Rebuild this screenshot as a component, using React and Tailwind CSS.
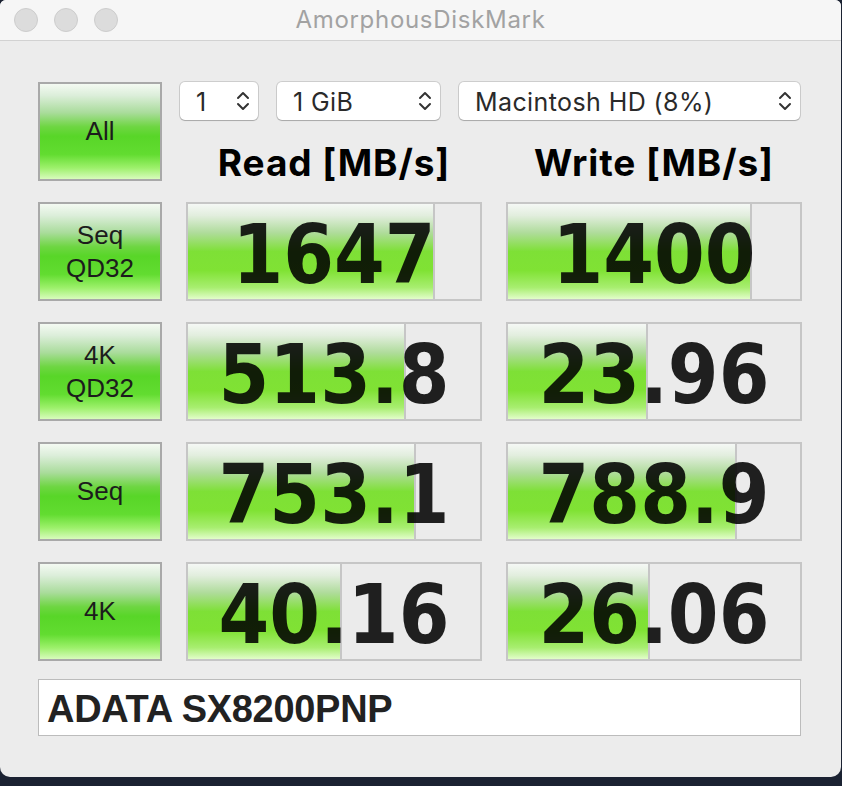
import React from "react";

const BTN_BG =
  "linear-gradient(to bottom, #f4faf2 0%, #dceeda 12%, #aadc9c 30%, #6ed642 45%, #58d628 55%, #62dc30 74%, #9cf06a 88%, #d8fcbc 100%)";
const BAR_BG =
  "linear-gradient(to bottom, #f5f8f5 0%, #e2eede 12%, #b0dc9c 30%, #7ee036 50%, #80e234 70%, #a8ee70 88%, #e2fdca 100%)";

const ROWS = [
  { label: ["Seq", "QD32"], read: "1647", rf: 0.845, write: "1400", wf: 0.834 },
  { label: ["4K", "QD32"], read: "513.8", rf: 0.745, write: "23.96", wf: 0.481 },
  { label: ["Seq"], read: "753.1", rf: 0.78, write: "788.9", wf: 0.783 },
  { label: ["4K"], read: "40.16", rf: 0.526, write: "26.06", wf: 0.488 },
];

function Chevrons() {
  return (
    <svg width="16" height="24" viewBox="0 0 16 24" fill="none" stroke="#333" strokeWidth="2" strokeLinecap="round" strokeLinejoin="round">
      <path d="M3 9 L8 4 L13 9" />
      <path d="M3 15 L8 20 L13 15" />
    </svg>
  );
}

function Select({ w, children }) {
  return (
    <div
      className="h-[38px] bg-white rounded-[5px] flex items-center justify-between pl-4 pr-[7px] shadow-[0_0_0_1px_rgba(0,0,0,0.13),0_1px_1px_rgba(0,0,0,0.18)]"
      style={{ width: w }}
    >
      <span className="pt-[3px] text-[25px] text-[#2a2a2a] tracking-[0.4px] font-['Inter',sans-serif] leading-none">{children}</span>
      <Chevrons />
    </div>
  );
}

function TestButton({ lines }) {
  return (
    <div
      className="h-[99px] border-2 border-[#a9a9a9] flex flex-col items-center justify-center text-[26px] leading-[33px] text-[#1c1c1c] font-['Liberation_Sans',sans-serif]"
      style={{ background: BTN_BG }}
    >
      {lines.map(l => (
        <span key={l}>{l}</span>
      ))}
    </div>
  );
}

function Cell({ value, frac }) {
  return (
    <div className="relative h-[99px] border-2 border-[#c6c6c6] bg-[#ebebeb]">
      <div
        className="absolute left-0 top-0 bottom-0 border-r-2 border-[#c6c6c6]"
        style={{ width: `${frac * 100}%`, background: BAR_BG }}
      />
      <div className="absolute inset-0 flex items-center justify-center pt-[6px]">
        <span className="text-[73px] font-bold leading-none text-black/[0.87] font-['DejaVu_Sans',sans-serif] scale-y-[1.13]">
          {value}
        </span>
      </div>
    </div>
  );
}

export default function App() {
  return (
    <div className="w-[842px] h-[786px] bg-[#1b2232]">
      <div className="w-[841px] h-[777px] bg-[#ececec] rounded-t-[6px] rounded-b-[10px] overflow-hidden">
        {/* Title bar */}
        <div className="relative h-[41px] bg-[#f6f6f6] border-b border-[#d2d2d2] flex items-center justify-center">
          <div className="absolute left-[14px] top-[8px] flex gap-4">
            <div className="w-6 h-6 rounded-full bg-[#dcdcdc] border border-[#cdcdcd]" />
            <div className="w-6 h-6 rounded-full bg-[#dcdcdc] border border-[#cdcdcd]" />
            <div className="w-6 h-6 rounded-full bg-[#dcdcdc] border border-[#cdcdcd]" />
          </div>
          <span className="text-[24px] text-[#a2a2a2] font-['Inter',sans-serif] tracking-[0.7px]">AmorphousDiskMark</span>
        </div>

        {/* Content */}
        <div className="pl-[38px] pt-[41px]">
          <div className="grid grid-cols-[124px_296px_296px] gap-x-6 gap-y-[21px]">
            <TestButton lines={["All"]} />
            <div className="col-span-2 h-[99px] flex flex-col">
              <div className="flex gap-[19px] -ml-[6px]">
                <Select w={78}>1</Select>
                <Select w={163}>1 GiB</Select>
                <Select w={341}>Macintosh HD (8%)</Select>
              </div>
              <div className="grid grid-cols-[296px_296px] gap-x-6 mt-[24px]">
                <div className="text-center text-[37px] font-bold text-black font-['Inter',sans-serif] leading-[37px] tracking-[0.9px]">Read [MB/s]</div>
                <div className="text-center text-[37px] font-bold text-black font-['Inter',sans-serif] leading-[37px] tracking-[0.9px]">Write [MB/s]</div>
              </div>
            </div>

            {ROWS.map((r, i) => (
              <React.Fragment key={i}>
                <TestButton lines={r.label} />
                <Cell value={r.read} frac={r.rf} />
                <Cell value={r.write} frac={r.wf} />
              </React.Fragment>
            ))}
          </div>

          <div className="mt-[18px] w-[763px] h-[57px] bg-white border border-[#bcbcbc] flex items-center pl-[8px]">
            <span className="pt-[2px] text-[38px] font-bold text-[#222] font-['Liberation_Sans',sans-serif] tracking-[-0.3px] leading-none">
              ADATA SX8200PNP
            </span>
          </div>
        </div>
      </div>
    </div>
  );
}
